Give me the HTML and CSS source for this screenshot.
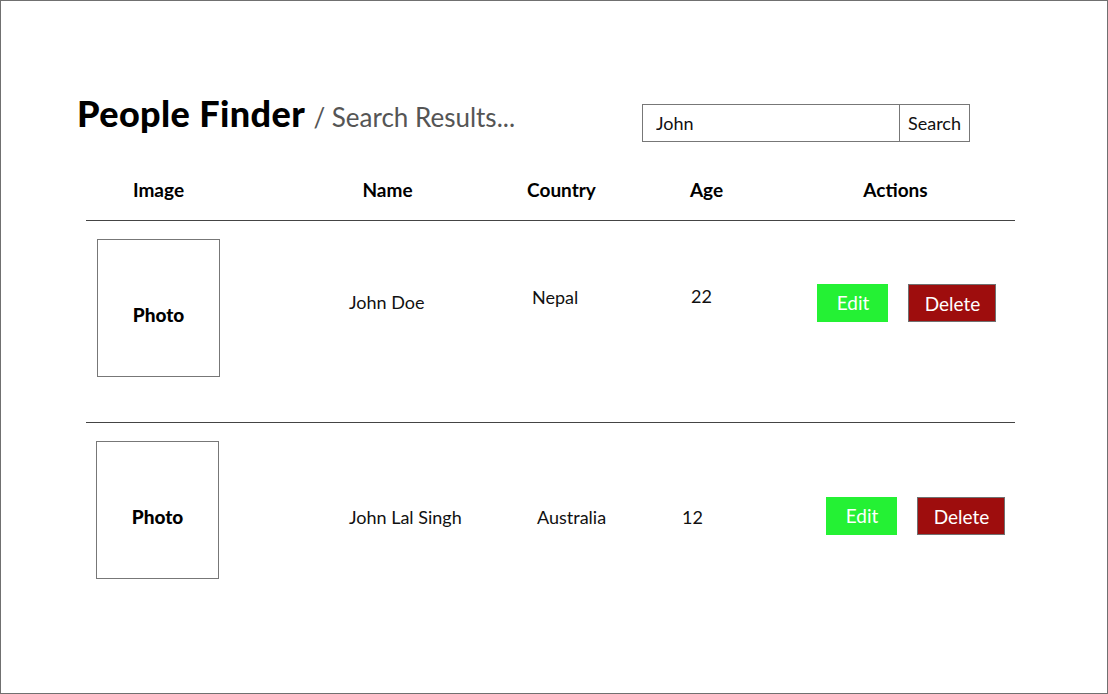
FILE: index.html
```html
<!DOCTYPE html>
<html lang="en">
<head>
<meta charset="utf-8">
<title>People Finder</title>
<link rel="stylesheet" href="styles.css">
</head>
<body>
<div class="frame">
  <header class="topbar">
    <h1 class="title">People Finder <span class="subtitle">/ Search Results...</span></h1>
    <form class="search">
      <input class="search-input" type="text" value="John">
      <button class="search-btn" type="button">Search</button>
    </form>
  </header>

  <div class="table">
    <div class="thead">
      <div class="th th-image"><span class="label label-image">Image</span></div>
      <div class="th th-name"><span class="label label-name">Name</span></div>
      <div class="th th-country"><span class="label label-country">Country</span></div>
      <div class="th th-age"><span class="label label-age">Age</span></div>
      <div class="th th-actions"><span class="label label-actions">Actions</span></div>
    </div>

    <div class="row row-first">
      <div class="cell cell-photo"><div class="photo">Photo</div></div>
      <div class="cell cell-name">John Doe</div>
      <div class="cell cell-country">Nepal</div>
      <div class="cell cell-age">22</div>
      <div class="cell cell-actions">
        <button class="btn btn-edit" type="button">Edit</button>
        <button class="btn btn-delete" type="button">Delete</button>
      </div>
    </div>

    <div class="row row-second">
      <div class="cell cell-photo"><div class="photo">Photo</div></div>
      <div class="cell cell-name">John Lal Singh</div>
      <div class="cell cell-country">Australia</div>
      <div class="cell cell-age">12</div>
      <div class="cell cell-actions">
        <button class="btn btn-edit" type="button">Edit</button>
        <button class="btn btn-delete" type="button">Delete</button>
      </div>
    </div>
  </div>
</div>
</body>
</html>
```

FILE: styles.css
```css
* { box-sizing: border-box; }

html, body {
  margin: 0;
  padding: 0;
  background: #fff;
}

body {
  font-family: "Lato", "Liberation Sans", sans-serif;
  color: #111;
}

.frame {
  width: 1108px;
  height: 694px;
  border: 1px solid #707070;
  overflow: hidden;
}

/* ---------- top bar ---------- */
.topbar {
  height: 141px;
  padding: 92px 137px 0 76px;
  display: flex;
  justify-content: space-between;
  align-items: flex-start;
}

.title {
  margin: 0;
  font-size: 36px;
  line-height: 40px;
  font-weight: 900;
  letter-spacing: 0.4px;
  color: #000;
  white-space: nowrap;
}

.subtitle {
  font-size: 26px;
  font-weight: 400;
  letter-spacing: 0;
  color: #555;
}

.search {
  margin: 11px 0 0;
  display: flex;
  height: 38px;
  border: 1px solid #777;
}

.search-input {
  width: 256px;
  height: 36px;
  border: 0;
  padding: 0 0 0 13px;
  margin: 0;
  font-family: inherit;
  font-size: 18px;
  color: #111;
  outline: none;
  background: #fff;
}

.search-btn {
  width: 70px;
  height: 36px;
  border: 0;
  border-left: 1px solid #777;
  margin: 0;
  padding: 0;
  background: #fff;
  font-family: inherit;
  font-size: 18px;
  color: #111;
}

/* ---------- table ---------- */
.table {
  margin: 38px 92px 0 85px;
}

.thead,
.row {
  display: grid;
  grid-template-columns: 254px 175px 160px 125px 215px;
}

.thead {
  height: 41px;
  border-bottom: 1px solid #444;
}

.th {
  font-size: 19px;
  line-height: 20px;
  font-weight: 700;
  color: #000;
}

.label {
  display: inline-block;
  text-align: center;
  white-space: nowrap;
}

.th-image   { padding-left: 44px; }
.th-name    { padding-left: 19px; }
.th-country { padding-left: 8px; }
.th-age     { padding-left: 13px; }
.th-actions { padding-left: 60px; }

.label-image   { width: 57px; }
.label-name    { width: 57px; }
.label-country { width: 77px; }
.label-age     { width: 37px; }
.label-actions { width: 71px; }

.row {
  align-items: start;
}

.row-first {
  height: 202px;
  border-bottom: 1px solid #444;
}

.row-second {
  height: 200px;
}

.cell {
  font-size: 18px;
  line-height: 24px;
  color: #111;
  white-space: nowrap;
}

.cell-photo { padding-top: 18px; }

.photo {
  width: 123px;
  height: 138px;
  border: 1px solid #777;
  display: flex;
  align-items: center;
  justify-content: center;
  padding-top: 13px;
  font-size: 19px;
  font-weight: 900;
  color: #000;
}

.cell-actions {
  display: flex;
  gap: 20px;
}

/* first row offsets */
.row-first .cell-photo   { padding-left: 11px; }
.row-first .cell-name    { padding: 69px 0 0 9px; }
.row-first .cell-country { padding: 64px 0 0 17px; }
.row-first .cell-age     { padding: 63px 0 0 16px; }
.row-first .cell-actions { padding: 63px 0 0 17px; }

/* second row offsets */
.row-second .cell-photo   { padding-left: 10px; }
.row-second .cell-name    { padding: 82px 0 0 9px; }
.row-second .cell-country { padding: 82px 0 0 22px; }
.row-second .cell-age     { padding: 82px 0 0 7px; }
.row-second .cell-actions { padding: 74px 0 0 26px; }

.btn {
  height: 38px;
  margin: 0;
  padding: 0 0 0 1px;
  font-family: inherit;
  font-size: 19px;
  color: #fff;
  line-height: 38px;
}

.btn-edit {
  width: 71px;
  background: #24f134;
  border: 0;
}

.btn-delete {
  width: 88px;
  background: #9e0d0d;
  border: 1px solid #707070;
}
```
